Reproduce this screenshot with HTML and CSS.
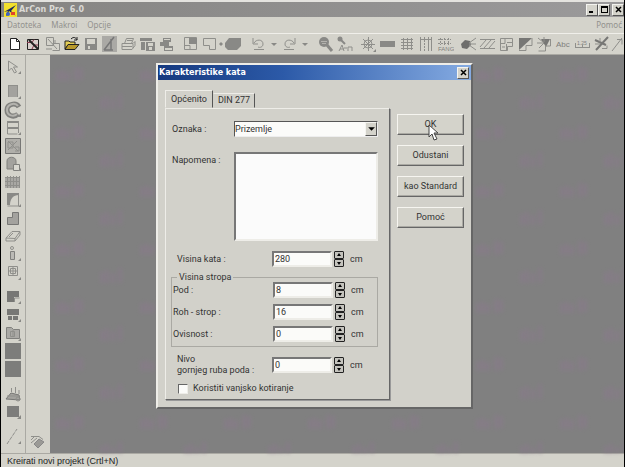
FILE: index.html
```html
<!DOCTYPE html>
<html lang="hr">
<head>
<meta charset="utf-8">
<title>ArCon Pro 6.0</title>
<link rel="stylesheet" href="styles.css">
</head>
<body>
<div class="app">
  <header class="titlebar">
    <svg class="logo" viewBox="0 0 13 14"><rect width="13" height="14" fill="#f2e02c"/><path d="M0 9L12 2L7 8L12 13L5 8L3 13L2 12L4 8Z" fill="#1c2a5c"/><path d="M7 9h4v3h-4z" fill="#e0452c"/><circle cx="4" cy="11" r="2" fill="#3d62c8"/></svg>
    <h1 class="app-title">ArCon Pro&nbsp; 6.0</h1>
    <button class="win-btn" aria-label="Minimiziraj"><svg viewBox="0 0 9 9"><path d="M1 6h4v2h-4z"/></svg></button>
    <button class="win-btn" aria-label="Maksimiziraj"><svg viewBox="0 0 9 9"><path d="M1 1h7v7h-7zM2 3v4h5v-4z" fill-rule="evenodd"/></svg></button>
    <button class="win-btn win-close" aria-label="Zatvori"><svg viewBox="0 0 9 9"><path d="M2 2L7 7M7 2L2 7" stroke="#000" stroke-width="1.5"/></svg></button>
  </header>
  <nav class="menubar">
    <a href="#">Datoteka</a><a href="#">Makroi</a><a href="#">Opcije</a><a href="#" class="menu-help">Pomoć</a>
  </nav>
  <div class="toolbar">
    <button class="tool" aria-label="Novi"><svg viewBox="0 0 19 18"><path d="M5.500 3.500h6l3 3v8h-9z" fill="#fff" stroke="#222"/><path d="M11.500 3.500v3h3" fill="none" stroke="#222"/></svg></button>
    <button class="tool" aria-label="Čarobnjak"><svg viewBox="0 0 19 18"><path d="M3.500 4.500h11v10h-11z" fill="#d8cfcc" stroke="#222"/><path d="M3 7.500h5l2-3M14 10h-4l-2 4" fill="none" stroke="#8a3b4f"/><path d="M5 5L14 14" stroke="#222" stroke-width="2"/></svg></button>
    <button class="tool" aria-label="Odabir projekta"><svg viewBox="0 0 19 18"><path d="M3.500 2.500h7v8h-7zM9.500 8.500h7v7h-7M5 4L14 14M3 14h6M12 5v3" class="ln"/></svg></button>
    <button class="tool" aria-label="Otvori"><svg viewBox="0 0 19 18"><path d="M3 6h4l1 1h5v3H6l-3 4z" fill="#e5cf55" stroke="#222"/><path d="M3 14.500l3-5h11l-4 5z" fill="#b8992c" stroke="#222"/><path d="M9 4c3-3 5-1 6 1M15 2v3h-3" fill="none" stroke="#222"/></svg></button>
    <button class="tool" aria-label="Spremi"><svg viewBox="0 0 19 18"><path d="M4 3h12v12H4zM6 4v5h8V4zM7 11v3h2v-3z" class="sf" fill-rule="evenodd"/></svg></button>
    <button class="tool" aria-label="Konstrukcija"><svg viewBox="0 0 19 18"><path d="M2 1h15v16H2z" fill="#aaa9a5"/><path d="M4 15L14 2M11 4v11M4 15h9" stroke="#777" fill="none" stroke-width="1.5"/></svg></button>
    <button class="tool" aria-label="Ispis"><svg viewBox="0 0 19 18"><path d="M5.500 8.500l2-5h7l-2 5M3 8.500h11l2-2v4l-3 4H3zM3 11.500h10M14 9v4M8 5.500h5" class="ln"/></svg></button>
    <button class="tool" aria-label="Spremi prikaz"><svg viewBox="0 0 19 18"><path d="M2 3h12v3H2zM3 7h4v8H3zM8 7h9v9H8zM10 8v3h5V8zM11 12v3h3v-3z" class="sf" fill-rule="evenodd"/></svg></button>
    <button class="tool" aria-label="Slojevi"><svg viewBox="0 0 19 18"><path d="M6 3h8v4H6zM7 4v1h6V4zM3 7h9v4H3zM7 11h9v5H7zM8 13v2h7v-2z" class="sf" fill-rule="evenodd"/></svg></button>
    <span class="sep"></span>
    <button class="tool" aria-label="Plan"><svg viewBox="0 0 19 18"><path d="M3.500 2.500h12v12h-12zM3 10.500h6v4" class="ln"/><path d="M8 3h8v6H8z" class="sf"/></svg></button>
    <button class="tool" aria-label="Obris"><svg viewBox="0 0 19 18"><path d="M3.500 3.500h12v11h-6v-4h-6z" class="ln"/></svg></button>
    <button class="tool tool-wide" aria-label="Tijelo"><svg viewBox="0 0 25 18"><path d="M0 9l2-2 2 2-2 2zM10 3h12v8l-4 4h-9l-3-3V8z" class="sf"/></svg></button>
    <span class="sep"></span>
    <button class="tool" aria-label="Poništi"><svg viewBox="0 0 19 18"><path d="M5 8c2-4 9-4 9 1c0 3-3 4-5 3M4 3v6h5M5 14.500h10" class="ln"/></svg></button>
    <button class="tool tool-narrow" aria-label="Popis poništavanja"><svg viewBox="0 0 12 18"><path d="M3 8h6l-3 3z" class="sf"/></svg></button>
    <button class="tool" aria-label="Ponovi"><svg viewBox="0 0 19 18"><path d="M14 8c-2-4-9-4-9 1c0 3 3 4 5 3M15 3v6h-5M4 14.500h10" class="ln"/></svg></button>
    <button class="tool tool-narrow" aria-label="Popis ponavljanja"><svg viewBox="0 0 12 18"><path d="M3 8h6l-3 3z" class="sf"/></svg></button>
    <span class="sep"></span>
    <button class="tool" aria-label="Povećalo"><svg viewBox="0 0 19 18"><circle cx="8" cy="7" r="5" class="sf"/><path d="M5 6.500h6M6 8.500h4" stroke="#b4b3ae"/><path d="M11 10l5 6" stroke="#898986" stroke-width="3"/></svg></button>
    <button class="tool" aria-label="Traži tekst"><svg viewBox="0 0 19 18"><circle cx="5" cy="4" r="2.500" class="sf"/><path d="M6 5l4 4" stroke="#898986" stroke-width="2"/><path d="M4 16l3-6 2 6M5 14h4M9 13h3M13 16v-4h4v4" class="ln"/></svg></button>
    <span class="sep"></span>
    <button class="tool" aria-label="Središte"><svg viewBox="0 0 19 18"><circle cx="9" cy="9" r="4" class="ln"/><path d="M9.500 2v14M2 9.500h14M4 4l10 10M14 4L4 14" class="ln"/><path d="M17 14v3h-3z" class="sf"/></svg></button>
    <button class="tool" aria-label="Linija"><svg viewBox="0 0 19 18"><path d="M2 6h15v6H2z" class="sf"/></svg></button>
    <button class="tool" aria-label="Raster"><svg viewBox="0 0 19 18"><path d="M4 4.500h12M4 7.500h12M4 10.500h12M4 13.500h12M6.500 3v12M10.500 3v12M14.500 3v12" class="ln"/></svg></button>
    <button class="tool" aria-label="Vodilice"><svg viewBox="0 0 19 18"><path d="M4.500 2v14M15.500 2v14M12.500 2v14M4 4.500h11" class="ln"/><path d="M8.500 2v14" class="ln" stroke-dasharray="2 1"/></svg></button>
    <button class="tool" aria-label="Raster folije"><svg viewBox="0 0 19 18"><path d="M3 4.500h13M3 8.500h13M5.500 3v7M9.500 3v7M13.500 3v7" class="ln" stroke-dasharray="2 1"/><text x="3" y="16" font-size="6">FANG</text></svg></button>
    <span class="sep"></span>
    <button class="tool" aria-label="Točka"><svg viewBox="0 0 19 18"><path d="M2 9l4-4 5 1 1 4-4 4-5-1z" fill="#6e6e6c"/><path d="M10 8l7-5M10 9h7M10 10l7 5" class="ln"/></svg></button>
    <button class="tool" aria-label="Šrafura"><svg viewBox="0 0 19 18"><path d="M2 4.500h15M2 13.500h15M2 12l6-7M6 13l7-8M11 13l6-7" class="ln"/></svg></button>
    <button class="tool" aria-label="Tlocrt"><svg viewBox="0 0 19 18"><path d="M3.500 3.500h12v8h-5v4h-7zM3 8.500h5v-5M10 7.500h5M9.500 9v6M5 12h3" class="ln"/></svg></button>
    <button class="tool" aria-label="Sjena"><svg viewBox="0 0 19 18"><path d="M3 3h13L3 15z" fill="#777775"/><path d="M3 15.500h7v-5h6V3" class="ln"/></svg></button>
    <button class="tool" aria-label="Sunce"><svg viewBox="0 0 19 18"><path d="M6 4h9l-4 8z" fill="#777775"/><path d="M3 3l5 4M9 2v5M2 8h7M4 13l5-5M15.500 4v7h-5v5h-7" class="ln"/></svg></button>
    <button class="tool" aria-label="Tekst"><svg viewBox="0 0 19 18"><text x="2" y="12" font-size="8">Abc</text></svg></button>
    <button class="tool" aria-label="Kotiranje"><svg viewBox="0 0 19 18"><path d="M2.500 8v5M16.500 8v5M2 12.500h14M9.500 10v3" class="ln"/><text x="4" y="10" font-size="5">1.25</text></svg></button>
    <button class="tool" aria-label="Alati"><svg viewBox="0 0 19 18"><path d="M3 5l11 5M16 2L4 15" stroke="#777775" stroke-width="2"/><path d="M3 9h5M8 3v4M10 13.500h5v-3" class="ln"/></svg></button>
    <button class="tool" aria-label="Izmjera"><svg viewBox="0 0 19 18"><path d="M1 16L11 3M6 4.500h5v5" class="ln"/></svg></button>
  </div>

  <div class="workspace">
    <div class="side-tools">
      <button class="side" aria-label="Odabir"><svg viewBox="0 0 18 18"><path d="M4.500 3v10l3-3 3 5 2-1-3-5h4z" class="ln"/><path d="M17 13v3h-3z" class="sf"/></svg></button>
      <span class="vsep"></span>
      <button class="side" aria-label="Zid"><svg viewBox="0 0 18 18"><path d="M4 3h10v11H4z" fill="#a3a29e"/><path d="M4.500 3v11M13.500 3v11M4 2.500h10" class="ln"/><path d="M17 13v3h-3z" class="sf"/></svg></button>
      <button class="side" aria-label="Luk"><svg viewBox="0 0 18 18"><path d="M15 6c-3-5-12-3-12 3s7 8 11 4" fill="none" stroke="#80807d" stroke-width="5"/><path d="M14 5c-3-4-11-2-11 4s7 7 10 4" fill="none" stroke="#b4b3ae" stroke-width="2"/><path d="M17 12v4h-4z" class="sf"/></svg></button>
      <button class="side" aria-label="Prozor"><svg viewBox="0 0 18 18"><path d="M3 2h12v2H3zM3 8h12v2H3z" class="sf"/><path d="M3.500 2v13h10M14.500 2v12" class="ln"/><path d="M17 13v3h-3z" class="sf"/></svg></button>
      <button class="side" aria-label="Kat"><svg viewBox="0 0 18 18"><path d="M1.500 1.500h15v15h-15z" fill="#b0afaa" stroke="#777775"/><path d="M4 4l10 10M4 13L13 4M4 5v6h5V5zM11 10h4v4h-4" class="ln"/></svg></button>
      <button class="side" aria-label="Vrata"><svg viewBox="0 0 18 18"><path d="M3 14V6c0-5 9-5 9 0v8z" fill="#a3a29e" stroke="#80807d"/><path d="M9.500 9.500h6v6h-6z" fill="#d9d8d1" stroke="#80807d"/><path d="M17 13v3h-3z" class="sf"/></svg></button>
      <button class="side" aria-label="Ograda"><svg viewBox="0 0 18 18"><path d="M1 4h15v11H1z" fill="#a9a8a4"/><path d="M1 4.500h15M1 8.500h15M1 12.500h15M3.500 3v12M6.500 3v12M9.500 3v12M12.500 3v12M15.500 3v12" class="ln"/></svg></button>
      <button class="side" aria-label="Krov"><svg viewBox="0 0 18 18"><path d="M3 2h12v2C9 4 6 8 6 14H3z" class="sf"/><path d="M14.500 3v12h-11" class="ln"/><path d="M17 13v3h-3z" class="sf"/></svg></button>
      <button class="side" aria-label="Ploča"><svg viewBox="0 0 18 18"><path d="M3.500 15.500v-7h5v-5h6v12z" fill="#a3a29e" stroke="#777775"/></svg></button>
      <button class="side" aria-label="Kosina"><svg viewBox="0 0 18 18"><path d="M2 11L8 4.500h8l-5 7zM2 11v3h9l5-6V5M5 10l4-4M11 11v3" class="ln"/></svg></button>
      <button class="side" aria-label="Stup"><svg viewBox="0 0 18 18"><circle cx="8" cy="3" r="1.500" class="ln"/><path d="M6.500 6.500h4v8h-4z" fill="#bbbab5" stroke="#80807d"/><path d="M17 13v3h-3z" class="sf"/></svg></button>
      <button class="side" aria-label="Dimnjak"><svg viewBox="0 0 18 18"><path d="M4.500 3.500h9v9h-9zM6.500 5.500h5v5h-5zM9 4v8M5 8h8" class="ln"/><path d="M17 14v3h-3z" class="sf"/></svg></button>
      <span class="vsep"></span>
      <button class="side" aria-label="Površina"><svg viewBox="0 0 18 18"><path d="M3 3h12v6H10v5H3z" fill="#777775"/><path d="M10.500 14v-4h5" class="ln"/><path d="M17 13v3h-3z" class="sf"/></svg></button>
      <button class="side" aria-label="Prozori"><svg viewBox="0 0 18 18"><path d="M3 3h12v6H3zM4 10h4v4H4zM9 10h5v4H9z" fill="#777775"/><path d="M17 13v3h-3z" class="sf"/></svg></button>
      <button class="side" aria-label="Mapa"><svg viewBox="0 0 18 18"><path d="M2.500 3.500h5l2 2h6v9h-13z" fill="#aaa9a5" stroke="#80807d"/><path d="M6.500 7.500h4v5h-4zM9 6v7" class="ln"/><path d="M17 14v3h-3z" class="sf"/></svg></button>
      <button class="side" aria-label="Boja 1"><svg viewBox="0 0 18 18"><path d="M1 1h16v16H1z" fill="#7d7d7b"/></svg></button>
      <button class="side" aria-label="Boja 2"><svg viewBox="0 0 18 18"><path d="M1 1h16v16H1z" fill="#7d7d7b"/></svg></button>
      <span class="vsep"></span>
      <button class="side" aria-label="Teren"><svg viewBox="0 0 18 18"><path d="M2 14L7 8l8 2 1 5z" fill="#a3a29e" stroke="#777775"/><path d="M7.500 3v4M11.500 2v6M15 5v4M3 11h12" class="ln"/><circle cx="14" cy="14" r="2" class="ln"/></svg></button>
      <button class="side" aria-label="Ispuna"><svg viewBox="0 0 18 18"><path d="M3 3h12v11H3z" fill="#7d7d7b"/><path d="M17 12v4h-4z" class="sf"/></svg></button>
      <span class="vsep"></span>
      <button class="side" aria-label="Pomoćna linija"><svg viewBox="0 0 18 18"><path d="M3 16L13 1" class="ln" stroke-dasharray="4 1"/><path d="M17 13v3h-3z" class="sf"/></svg></button>
    </div>
    <div class="side-tools side-second">
      <button class="side" aria-label="Slojevi ploče"><svg viewBox="0 0 18 18"><path d="M2 4.500h8l4 3M2 8l3-3M2 11l6-5" class="ln"/><path d="M5 12l5-5 5 3-6 6z" fill="#9b9a96" stroke="#888"/></svg></button>
    </div>
    <main class="canvas">
      <svg class="canvas-pattern" aria-hidden="true">
        <defs><pattern id="marks" width="84" height="58" patternUnits="userSpaceOnUse"><path d="M8 16v10M13 15v11M18 17v9M26 12v14M31 13v12M52 43v11M57 41v13M63 44v10M70 39v15" stroke="#8a7a8c" stroke-width="3"/></pattern></defs>
        <rect width="100%" height="100%" fill="url(#marks)"/>
      </svg>
    </main>
  </div>
  <footer class="status">Kreirati novi projekt (Crtl+N)</footer>

  <section class="dialog" role="dialog" aria-labelledby="dlg-title">
    <div class="dialog-title">
      <h2 id="dlg-title">Karakteristike kata</h2>
      <button class="win-btn" aria-label="Zatvori dijalog"><svg viewBox="0 0 9 9"><path d="M2 2L7 7M7 2L2 7" stroke="#000" stroke-width="1.500"/></svg></button>
    </div>
    <form class="dialog-body">
      <div class="form-side">
        <div class="tabs" role="tablist">
          <button type="button" class="tab tab-active" role="tab" aria-selected="true">Općenito</button>
          <button type="button" class="tab" role="tab" aria-selected="false">DIN 277</button>
        </div>
        <div class="panel">
          <div class="wide-row">
            <label for="oznaka">Oznaka :</label>
            <div class="combo">
              <select id="oznaka"><option>Prizemlje</option></select>
              <span class="combo-arrow"><svg viewBox="0 0 9 9"><path d="M2 3h6L5 6z"/></svg></span>
            </div>
          </div>
          <div class="wide-row note-row">
            <label for="napomena">Napomena :</label>
            <textarea id="napomena"></textarea>
          </div>
          <div class="num-row height-row">
            <label for="visina">Visina kata :</label><input id="visina" type="text" value="280">
            <span class="spin"><button type="button" aria-label="Više"><svg viewBox="0 0 8 6"><path d="M4 1l2 3H2z"/></svg></button><button type="button" aria-label="Manje"><svg viewBox="0 0 8 6"><path d="M4 5l2-3H2z"/></svg></button></span><span>cm</span>
          </div>
          <fieldset class="group">
            <legend>Visina stropa</legend>
            <div class="num-row">
              <label for="pod">Pod :</label><input id="pod" type="text" value="8">
              <span class="spin"><button type="button" aria-label="Više"><svg viewBox="0 0 8 6"><path d="M4 1l2 3H2z"/></svg></button><button type="button" aria-label="Manje"><svg viewBox="0 0 8 6"><path d="M4 5l2-3H2z"/></svg></button></span><span>cm</span>
            </div>
            <div class="num-row">
              <label for="roh">Roh - strop :</label><input id="roh" type="text" value="16">
              <span class="spin"><button type="button" aria-label="Više"><svg viewBox="0 0 8 6"><path d="M4 1l2 3H2z"/></svg></button><button type="button" aria-label="Manje"><svg viewBox="0 0 8 6"><path d="M4 5l2-3H2z"/></svg></button></span><span>cm</span>
            </div>
            <div class="num-row">
              <label for="ovisnost">Ovisnost :</label><input id="ovisnost" type="text" value="0">
              <span class="spin"><button type="button" aria-label="Više"><svg viewBox="0 0 8 6"><path d="M4 1l2 3H2z"/></svg></button><button type="button" aria-label="Manje"><svg viewBox="0 0 8 6"><path d="M4 5l2-3H2z"/></svg></button></span><span>cm</span>
            </div>
          </fieldset>
          <div class="num-row level-row">
            <label for="nivo">Nivo<br>gornjeg ruba poda :</label><input id="nivo" type="text" value="0">
            <span class="spin"><button type="button" aria-label="Više"><svg viewBox="0 0 8 6"><path d="M4 1l2 3H2z"/></svg></button><button type="button" aria-label="Manje"><svg viewBox="0 0 8 6"><path d="M4 5l2-3H2z"/></svg></button></span><span>cm</span>
          </div>
          <label class="check"><input type="checkbox">Koristiti vanjsko kotiranje</label>
        </div>
      </div>
      <div class="actions">
        <button type="button">OK</button>
        <button type="button">Odustani</button>
        <button type="button">kao Standard</button>
        <button type="button">Pomoć</button>
      </div>
    </form>
  </section>
  <svg class="pointer" viewBox="0 0 12 18" aria-hidden="true"><path d="M1 1v12l3-3 2 6 3-1-3-6h4z" fill="#fff" stroke="#444"/></svg>
</div>
</body>
</html>
```
FILE: styles.css
```css
* { box-sizing: border-box; }

body {
  margin: 0;
  background: #000;
  color: #333;
  font: 9px/11px Roboto, "Liberation Sans", sans-serif;
}

button, input, select, textarea {
  margin: 0;
  padding: 0;
  border: 0;
  border-radius: 0;
  background: none;
  color: inherit;
  font: inherit;
}

svg { display: block; }

.app {
  position: relative;
  display: flex;
  flex-direction: column;
  min-height: 100vh;
  margin: 0 1px;
  border-top: 2px solid #e4e3df;
  background: #d4d3cb;
  overflow: hidden;
}

.titlebar {
  display: flex;
  align-items: center;
  height: 15px;
  padding-left: 3px;
  background: linear-gradient(90deg, #858482, #9b9a9b);
}

.logo { width: 13px; height: 14px; margin-right: 2px; }

.app-title {
  flex: 1;
  margin: 0;
  color: #dad9d5;
  font: bold 8px/14px "DejaVu Sans", sans-serif;
}

.win-btn {
  display: grid;
  place-items: center;
  width: 12px;
  height: 12px;
  border: 1px solid;
  border-color: #f4f4f0 #555 #555 #f4f4f0;
  background: #d4d3cb;
}

.win-btn svg { width: 9px; height: 9px; }
.win-close { margin-left: 2px; }

.menubar {
  display: flex;
  gap: 10px;
  height: 16px;
  padding: 0 2px 0 6px;
  font: 8px/16px "Noto Sans", sans-serif;
}

.menubar a { color: #92918d; text-decoration: none; }
.menubar .menu-help { margin-left: auto; }

.toolbar {
  display: flex;
  align-items: center;
  height: 22px;
  padding-left: 4px;
  border-top: 1px solid #f0efea;
  border-bottom: 1px solid #aaa9a3;
  overflow: hidden;
}

.tool { flex: none; width: 19px; height: 18px; }
.tool-wide { width: 25px; }
.tool-narrow { width: 12px; }
.tool svg { width: 100%; height: 18px; }
.sep { flex: none; width: 5px; }

.ln { fill: none; stroke: #8f8f8b; }
.sf { fill: #898986; }
.tool text { fill: #80807d; font-family: "Liberation Sans", sans-serif; }

.workspace { display: flex; flex: 1; }

.side-tools {
  display: flex;
  flex-direction: column;
  align-items: center;
  width: 25px;
  padding-top: 3px;
  border-right: 1px solid #aaa9a3;
}

.side { flex: none; width: 18px; height: 18px; }
.side svg { width: 18px; height: 18px; }
.vsep { height: 7px; }

.side-second {
  justify-content: flex-end;
  width: 24px;
  padding-bottom: 3px;
  border-right: 0;
}

.canvas { display: flex; flex: 1; background: #808080; }
.canvas-pattern { flex: 1; width: 100%; height: 100%; opacity: 0.8; filter: blur(2px); }

.status {
  height: 14px;
  padding-left: 6px;
  border-top: 1px solid #aaa9a3;
  color: #222;
  font: 9px/15px "Liberation Sans", sans-serif;
}

.dialog {
  position: absolute;
  top: 61px;
  left: 155px;
  width: 317px;
  border: 2px solid;
  border-color: #eeede8 #666 #666 #eeede8;
  background: #d2d1ca;
}

.dialog-title {
  display: flex;
  align-items: center;
  height: 15px;
  padding: 0 2px 0 1px;
  background: linear-gradient(90deg, #15397f, #2c5aa8 40%, #85abe2);
}

.dialog-title h2 {
  flex: 1;
  margin: 0;
  color: #fff;
  font: bold 8px/15px "DejaVu Sans", sans-serif;
}

.dialog-body { display: flex; gap: 7px; padding: 10px 7px 7px; }
.form-side { flex: 1; }

.tabs { display: flex; align-items: flex-end; }

.tab {
  height: 15px;
  padding: 0 4px;
  border: 1px solid;
  border-color: #eeede8 #555 transparent transparent;
}

.tab-active {
  height: 18px;
  padding: 0 5px;
  border-left-color: #eeede8;
}

.panel {
  padding: 12px 11px 5px 5px;
  border: 1px solid;
  border-color: #eeede8 #666 #666 #eeede8;
  box-shadow: 1px 1px #999;
}

.wide-row {
  display: grid;
  grid-template-columns: 62px 1fr;
  align-items: center;
  padding-left: 1px;
}

.combo {
  display: flex;
  height: 16px;
  border: 1px solid;
  border-color: #555 #eee #eee #555;
  background: #fbfbf9;
}

.combo select { flex: 1; appearance: none; }

.combo-arrow {
  width: 12px;
  border: 1px solid;
  border-color: #f4f4f0 #555 #555 #f4f4f0;
  background: #d4d3cb;
}

.combo-arrow svg { width: 10px; height: 12px; }

.note-row { align-items: start; margin-top: 15px; }
.note-row label { padding-top: 3px; }

textarea {
  width: 100%;
  height: 89px;
  border: 2px solid;
  border-color: #777 #eeede8 #eeede8 #777;
  background: #fbfbfb;
  resize: none;
}

.num-row {
  display: grid;
  grid-template-columns: 99px 60px 10px 1fr;
  column-gap: 2px;
  align-items: center;
}

.num-row label { padding-left: 1px; }
.num-row > span:last-child { padding-left: 4px; }

.num-row input {
  width: 100%;
  height: 16px;
  padding-left: 1px;
  border: 2px solid;
  border-color: #777 #eeede8 #eeede8 #777;
  background: #fbfbf9;
}

.spin { display: flex; flex-direction: column; }

.spin button {
  display: grid;
  place-items: center;
  height: 8px;
  border: 1px solid #222;
  border-radius: 1px;
  background: #c4c3bd;
}

.spin svg { width: 8px; height: 6px; }

.height-row { margin: 10px 0 6px; }
.height-row label, .level-row label { padding-left: 6px; }

.group {
  display: grid;
  row-gap: 6px;
  min-width: 0;
  margin: 0;
  padding: 0 0 4px;
  border: 1px solid #aaa9a3;
}

.group legend { height: 9px; margin-left: 5px; padding: 0 2px; line-height: 9px; }

.level-row { margin-top: 7px; align-items: center; }

.check {
  display: flex;
  align-items: center;
  gap: 5px;
  margin-top: 7px;
  padding-left: 7px;
}

.check input {
  appearance: none;
  width: 10px;
  height: 10px;
  border: 1px solid;
  border-color: #666 #eeede8 #eeede8 #666;
  background: #fbfbf9;
}

.actions {
  display: flex;
  flex-direction: column;
  gap: 10px;
  width: 67px;
  padding-top: 24px;
}

.actions button {
  height: 21px;
  border: 1px solid;
  border-color: #f6f5f0 #666 #666 #f6f5f0;
  background: #d4d3cb;
  box-shadow: inset -1px -1px #aaa9a3;
}

.pointer {
  position: absolute;
  top: 122px;
  left: 427px;
  width: 12px;
  height: 18px;
}
```
